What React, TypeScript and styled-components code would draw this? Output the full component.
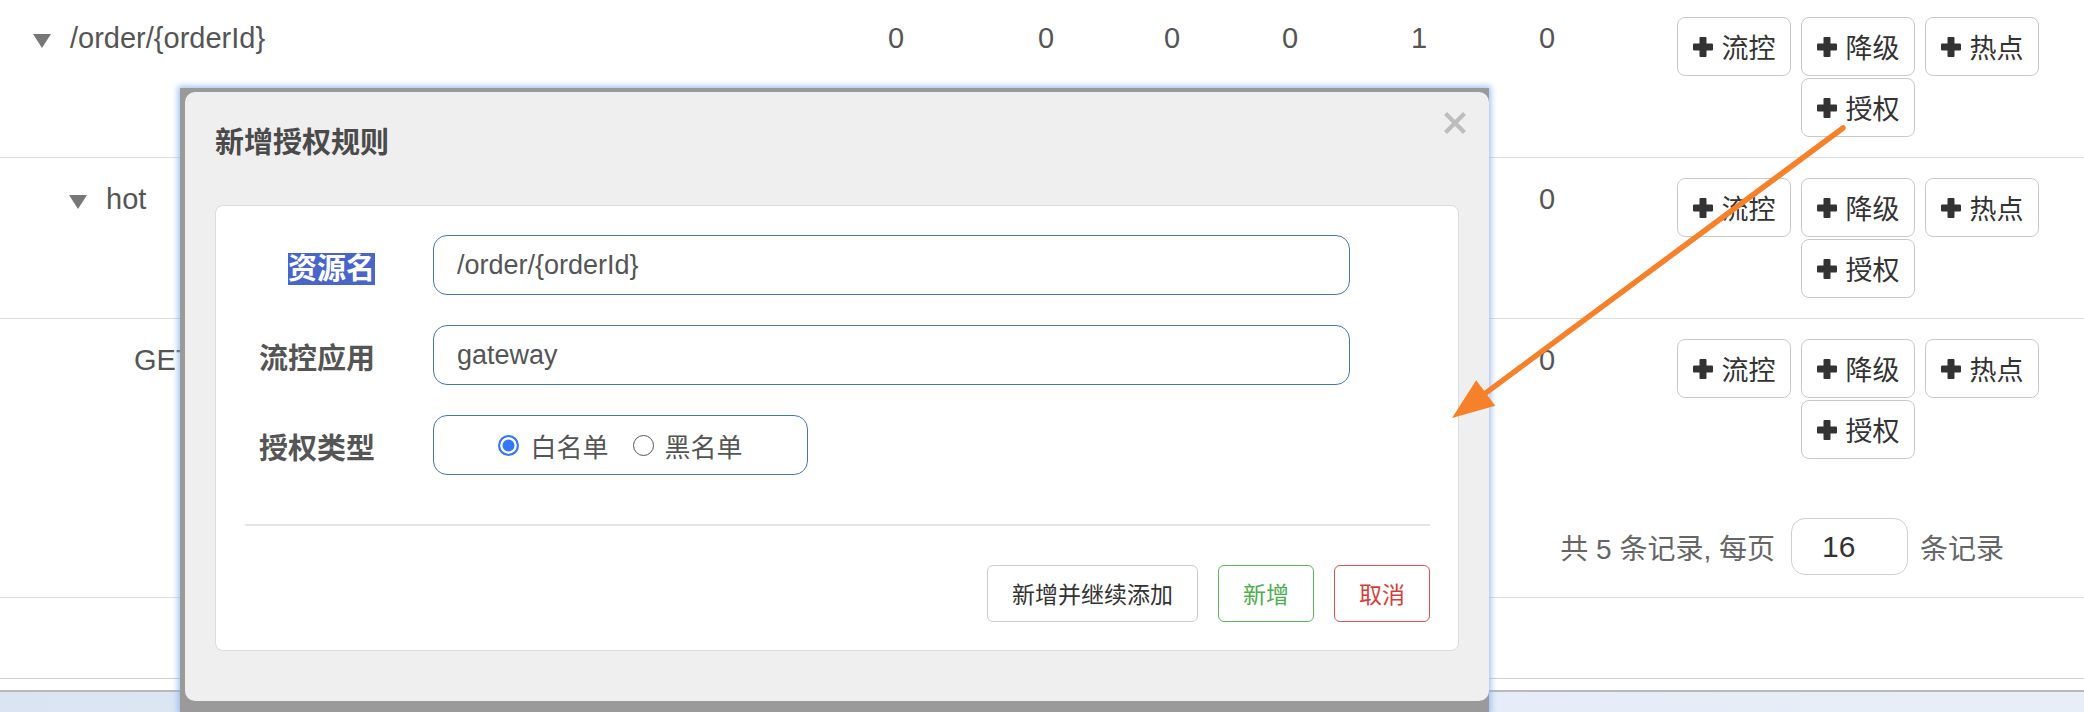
import styled, { createGlobalStyle } from 'styled-components';

const FONT = `"Liberation Sans", "Noto Sans CJK SC", sans-serif`;

const GlobalStyle = createGlobalStyle`
    html, body {
        margin: 0;
        padding: 0;
        background: #fff;
    }
    body {
        font-family: ${FONT};
    }
`;

interface ResourceRow {
    name: string;
    indent: number;
    expandable: boolean;
    stats: string[];
}

const resources: ResourceRow[] = [
    {name: '/order/{orderId}', indent: 33, expandable: true, stats: ['0', '0', '0', '0', '1', '0']},
    {name: 'hot', indent: 69, expandable: true, stats: ['0', '0', '0', '0', '0', '0']},
    {name: 'GET:/order/{orderId}', indent: 134, expandable: false, stats: ['0', '0', '0', '0', '0', '0']},
];

const actions = ['流控', '降级', '热点', '授权'];

const PlusIcon = () => (
    <svg width='22' height='22' viewBox='0 0 22 22'>
        <rect x='7.5' y='1' width='7' height='20' rx='1' fill='#333' />
        <rect x='1' y='7.5' width='20' height='7' rx='1' fill='#333' />
    </svg>
);

const CloseIcon = () => (
    <svg width='22' height='22' viewBox='0 0 22 22'>
        <path d='M3 3 L19 19 M19 3 L3 19' stroke='#bdbdbd' strokeWidth='4.2' strokeLinecap='square' />
    </svg>
);

// orange annotation arrow, drawn over the whole screenshot
const Arrow = () => {
    const tip = {x: 1452, y: 418};
    const start = {x: 1843, y: 128};
    const dx = tip.x - start.x;
    const dy = tip.y - start.y;
    const len = Math.sqrt(dx * dx + dy * dy);
    const ux = dx / len;
    const uy = dy / len;
    const back = {x: tip.x - ux * 42, y: tip.y - uy * 42};
    const c1 = {x: back.x - uy * 16, y: back.y + ux * 16};
    const c2 = {x: back.x + uy * 16, y: back.y - ux * 16};
    return (
        <Overlay viewBox='0 0 2084 712'>
            <line x1={start.x} y1={start.y} x2={back.x + ux * 4} y2={back.y + uy * 4}
                  stroke='#f7812a' strokeWidth='5.5' strokeLinecap='round' />
            <polygon points={`${tip.x},${tip.y} ${c1.x},${c1.y} ${c2.x},${c2.y}`} fill='#f7812a' />
        </Overlay>
    );
};

const App = () => {
    return (
        <Page>
            <GlobalStyle />
            <Table>
                {resources.map((r, i) => (
                    <Row key={r.name} $last={i === resources.length - 1}>
                        <NameCell $indent={r.indent}>
                            {r.expandable && <Caret />}
                            <span>{r.name}</span>
                        </NameCell>
                        {r.stats.map((s, j) => (
                            <StatCell key={j}>{s}</StatCell>
                        ))}
                        <ActionCell>
                            {actions.map((a) => (
                                <ActionButton key={a}>
                                    <PlusIcon />
                                    <span>{a}</span>
                                </ActionButton>
                            ))}
                        </ActionCell>
                    </Row>
                ))}
                <Pager>
                    共 5 条记录, 每页
                    <PageSizeInput defaultValue='16' />
                    条记录
                </Pager>
            </Table>
            <PanelEnd />
            <BottomBar />

            <ModalFrame>
                <ModalPanel>
                    <CloseButton><CloseIcon /></CloseButton>
                    <ModalHeader>
                        <ModalTitle>新增授权规则</ModalTitle>
                    </ModalHeader>
                    <FormCard>
                        <FormRow>
                            <FieldLabel><Selected>资源名</Selected></FieldLabel>
                            <TextField defaultValue='/order/{orderId}' />
                        </FormRow>
                        <FormRow>
                            <FieldLabel>流控应用</FieldLabel>
                            <TextField defaultValue='gateway' />
                        </FormRow>
                        <FormRow>
                            <FieldLabel>授权类型</FieldLabel>
                            <RadioBox>
                                <RadioOption>
                                    <RadioDot $checked />
                                    白名单
                                </RadioOption>
                                <RadioOption>
                                    <RadioDot />
                                    黑名单
                                </RadioOption>
                            </RadioBox>
                        </FormRow>
                        <Divider />
                        <FormFooter>
                            <FooterButton $variant='default'>新增并继续添加</FooterButton>
                            <FooterButton $variant='success'>新增</FooterButton>
                            <FooterButton $variant='danger'>取消</FooterButton>
                        </FormFooter>
                    </FormCard>
                </ModalPanel>
            </ModalFrame>

            <Arrow />
        </Page>
    );
};

const Page = styled.div`
    position: relative;
    width: 2084px;
    height: 712px;
    overflow: hidden;
    background: #fff;
    display: flex;
    flex-direction: column;
    font-family: ${FONT};
`;

const Table = styled.div`
    margin-top: -3px;
`;

const Row = styled.div<{ $last?: boolean }>`
    display: grid;
    grid-template-columns: 830px 132px 168px 84px 152px 106px 150px 1fr;
    align-items: start;
    padding: 20px 0;
    border-bottom: ${(p) => (p.$last ? 'none' : '1px solid #dcdcdc')};
`;

const NameCell = styled.div<{ $indent: number }>`
    display: flex;
    align-items: center;
    padding-left: ${(p) => p.$indent}px;
    font-size: 29px;
    line-height: 42px;
    color: #555;
    white-space: nowrap;
`;

const Caret = styled.span`
    width: 0;
    height: 0;
    margin-top: 6px;
    margin-right: 19px;
    border-left: 9px solid transparent;
    border-right: 9px solid transparent;
    border-top: 14px solid #777;
`;

const StatCell = styled.div`
    text-align: center;
    font-size: 29px;
    line-height: 42px;
    color: #555;
`;

const ActionCell = styled.div`
    display: flex;
    flex-wrap: wrap;
    justify-content: center;
    gap: 2px 10px;
    padding-left: 9px;
`;

const ActionButton = styled.button`
    display: inline-flex;
    align-items: center;
    justify-content: center;
    gap: 8px;
    box-sizing: border-box;
    width: 114px;
    height: 59px;
    padding: 0;
    border: 1.5px solid #c9c9c9;
    border-radius: 8px;
    background: #fff;
    font-family: ${FONT};
    font-size: 27px;
    color: #333;
    white-space: nowrap;
    cursor: pointer;
`;

const Pager = styled.div`
    display: flex;
    justify-content: flex-end;
    align-items: center;
    padding: 39px 80px 22px 0;
    border-bottom: 1px solid #dcdcdc;
    font-size: 28px;
    color: #666;
`;

const PageSizeInput = styled.input`
    box-sizing: border-box;
    width: 117px;
    height: 57px;
    margin: 0 12px 0 16px;
    padding: 0 0 0 30px;
    border: 1.5px solid #cfcfcf;
    border-radius: 14px;
    font-family: ${FONT};
    font-size: 30px;
    color: #333;
    outline: none;
`;

const PanelEnd = styled.div`
    height: 80px;
    margin-bottom: 11px;
    border-bottom: 1px solid #cfcfcf;
`;

const BottomBar = styled.div`
    flex: 1;
    border-top: 2px solid #b9b9b9;
    background: linear-gradient(90deg, #dbe4f2, #e4ecf7 60%, #e8eef8);
`;

const ModalFrame = styled.div`
    position: absolute;
    left: 180px;
    top: 88px;
    padding: 4px 0 11px 5px;
    background: #9a9a9a;
    box-shadow: 0 0 6px 2px rgba(130, 175, 240, 0.75);
`;

const ModalPanel = styled.div`
    position: relative;
    box-sizing: border-box;
    width: 1304px;
    padding: 0 30px 50px;
    background: #efefef;
    border-radius: 10px;
`;

const CloseButton = styled.span`
    position: absolute;
    top: 20px;
    right: 23px;
    display: flex;
`;

const ModalHeader = styled.div`
    box-sizing: border-box;
    height: 113px;
    padding-top: 30px;
`;

const ModalTitle = styled.h4`
    margin: 0;
    font-size: 29px;
    line-height: 42px;
    font-weight: bold;
    color: #4a4a4a;
`;

const FormCard = styled.div`
    box-sizing: border-box;
    height: 446px;
    padding: 29px 28px 28px 29px;
    border: 1px solid #dcdcdc;
    border-radius: 8px;
    background: #fff;
`;

const FormRow = styled.div`
    display: grid;
    grid-template-columns: 130px 917px;
    column-gap: 58px;
    align-items: center;
    height: 60px;

    & + & {
        margin-top: 30px;
    }
`;

const FieldLabel = styled.label`
    padding-top: 8px;
    text-align: right;
    font-size: 29px;
    line-height: 44px;
    font-weight: bold;
    color: #555;
    white-space: nowrap;
`;

const Selected = styled.span`
    background: #4965c8;
    color: #fff;
`;

const TextField = styled.input`
    box-sizing: border-box;
    width: 100%;
    height: 60px;
    padding: 0 23px;
    border: 1.5px solid #4676b6;
    border-radius: 14px;
    background: #fff;
    font-family: ${FONT};
    font-size: 27px;
    color: #555;
    outline: none;
`;

const RadioBox = styled.div`
    box-sizing: border-box;
    display: flex;
    align-items: center;
    justify-content: center;
    gap: 24px;
    width: 375px;
    height: 60px;
    border: 1.5px solid #4676b6;
    border-radius: 14px;
`;

const RadioOption = styled.label`
    display: inline-flex;
    align-items: center;
    gap: 11px;
    font-size: 26px;
    color: #555;
`;

const RadioDot = styled.span<{ $checked?: boolean }>`
    box-sizing: border-box;
    width: 21px;
    height: 21px;
    border-radius: 50%;
    border: ${(p) => (p.$checked ? '2px solid #3478f6' : '1.5px solid #555')};
    background: ${(p) => (p.$checked ? '#3478f6' : '#fff')};
    box-shadow: ${(p) => (p.$checked ? 'inset 0 0 0 2.5px #fff' : 'none')};
`;

const Divider = styled.div`
    margin-top: 49px;
    height: 1.5px;
    background: #e3e3e3;
`;

const FormFooter = styled.div`
    display: flex;
    justify-content: flex-end;
    gap: 20px;
    margin-top: 39px;
`;

const buttonColors = {
    default: {border: '#cccccc', color: '#333'},
    success: {border: '#5cb85c', color: '#4cae4c'},
    danger: {border: '#d9534f', color: '#d43f3a'},
};

const FooterButton = styled.button<{ $variant: keyof typeof buttonColors }>`
    height: 57px;
    padding: 0 24px;
    border: 1.5px solid ${(p) => buttonColors[p.$variant].border};
    border-radius: 6px;
    background: #fff;
    font-family: ${FONT};
    font-size: 23px;
    color: ${(p) => buttonColors[p.$variant].color};
    cursor: pointer;
`;

const Overlay = styled.svg`
    position: absolute;
    left: 0;
    top: 0;
    width: 2084px;
    height: 712px;
    pointer-events: none;
`;

export default App;
